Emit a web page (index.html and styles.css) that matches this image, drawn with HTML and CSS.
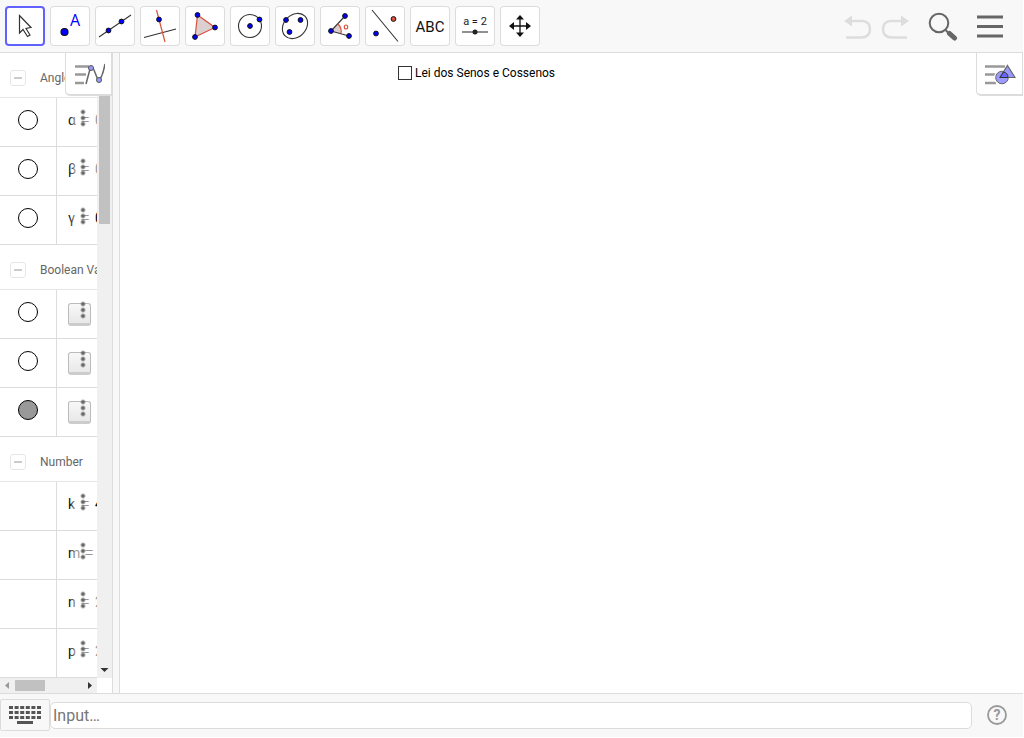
FILE: index.html
```html
<!DOCTYPE html>
<html lang="pt">
<head>
  <meta charset="UTF-8">
  <title>Lei dos Senos e Cossenos</title>
  <link rel="stylesheet" href="styles.css">
</head>
<body>
  <!-- Toolbar -->
  <header class="toolbar">
    <div class="tools">
      <button type="button" class="tool selected" aria-label="Move">
        <svg viewBox="0 0 40 40"><path d="M14.500 9.500V27L18 23.500L22.500 30.500L25 29L21 22.500L26 21.500Z" fill="#fff" stroke="#333" stroke-width="1.200"/></svg>
      </button>
      <button type="button" class="tool" aria-label="Point">
        <svg viewBox="0 0 40 40"><circle class="pt big" cx="14.500" cy="26" r="3.500"/><text x="20" y="20" class="point-label">A</text></svg>
      </button>
      <button type="button" class="tool" aria-label="Line">
        <svg viewBox="0 0 40 40"><path class="ln" d="M4 31L36 9"/><circle class="pt" cx="13.500" cy="24.500" r="2.400"/><circle class="pt" cx="26.500" cy="15.500" r="2.400"/></svg>
      </button>
      <button type="button" class="tool" aria-label="Perpendicular Line">
        <svg viewBox="0 0 40 40"><path class="ln" d="M4 31.500L36 23"/><path class="red" d="M16.500 4L25 36"/><circle class="pt" cx="19" cy="13.500" r="2.400"/></svg>
      </button>
      <button type="button" class="tool" aria-label="Polygon">
        <svg viewBox="0 0 40 40"><path class="red area" d="M12.500 9L30 21.500L10 31Z"/><circle class="pt" cx="12.500" cy="9" r="2.400"/><circle class="pt" cx="30" cy="21.500" r="2.400"/><circle class="pt" cx="10" cy="31" r="2.400"/></svg>
      </button>
      <button type="button" class="tool" aria-label="Circle">
        <svg viewBox="0 0 40 40"><circle class="ln" cx="20" cy="20" r="11.500"/><circle class="pt" cx="20" cy="20" r="2.400"/><circle class="pt" cx="29.500" cy="13.500" r="2.400"/></svg>
      </button>
      <button type="button" class="tool" aria-label="Ellipse">
        <svg viewBox="0 0 40 40"><ellipse class="ln" cx="20" cy="20" rx="14" ry="11" transform="rotate(-45 20 20)"/><circle class="pt" cx="11" cy="14" r="2.400"/><circle class="pt" cx="25.500" cy="14" r="2.400"/><circle class="pt" cx="14.500" cy="26" r="2.400"/></svg>
      </button>
      <button type="button" class="tool" aria-label="Angle">
        <svg viewBox="0 0 40 40"><path class="area" d="M11 25L18 18Q22 22 21 27.500Z"/><path class="ln" d="M25 10L11 25L29 30"/><path class="red" d="M18 18Q22 22 21 27.500"/><ellipse class="red" cx="26" cy="21" rx="1.700" ry="2"/><circle class="pt" cx="25" cy="10" r="2.400"/><circle class="pt" cx="11" cy="25" r="2.400"/><circle class="pt" cx="29" cy="30" r="2.400"/></svg>
      </button>
      <button type="button" class="tool" aria-label="Reflect about Line">
        <svg viewBox="0 0 40 40"><path class="ln" d="M7 4L33 35.500"/><circle class="pt" cx="11" cy="27.500" r="2.400"/><circle class="pt image" cx="28.500" cy="13" r="2.400"/></svg>
      </button>
      <button type="button" class="tool" aria-label="Text">
        <svg viewBox="0 0 40 40"><text x="20" y="26" class="abc">ABC</text></svg>
      </button>
      <button type="button" class="tool" aria-label="Slider">
        <svg viewBox="0 0 40 40"><text x="20" y="19" class="slider-label">a = 2</text><path d="M7 26H33" stroke="#555" stroke-width="1.300"/><circle cx="20" cy="26" r="2.500" fill="#222"/></svg>
      </button>
      <button type="button" class="tool" aria-label="Move Graphics View">
        <svg viewBox="0 0 40 40"><path d="M20 12V28M12 20H28" stroke="#111" stroke-width="1.300"/><path d="M20 9L24 13.500H16ZM20 31L24 26.500H16ZM9 20L14 16V24ZM31 20L26 16V24Z" fill="#111"/></svg>
      </button>
    </div>
    <div class="actions">
      <button type="button" class="action" aria-label="Undo" disabled>
        <svg viewBox="0 0 30 30"><path d="M7 10H20Q27 11 27 18Q27 26.500 18 26.500H3" fill="none" stroke="#ddd" stroke-width="2.500"/><path d="M1 10L9 4.500V15.500Z" fill="#ddd"/></svg>
      </button>
      <button type="button" class="action" aria-label="Redo" disabled>
        <svg viewBox="0 0 30 30"><path d="M23 10H10Q3 11 3 18Q3 26.500 12 26.500H27" fill="none" stroke="#ddd" stroke-width="2.500"/><path d="M29 10L21 4.500V15.500Z" fill="#ddd"/></svg>
      </button>
      <button type="button" class="action search" aria-label="Search">
        <svg viewBox="0 0 30 30"><circle cx="11" cy="12" r="9.300" fill="none" stroke="#666" stroke-width="2"/><path d="M17.500 19L21 22.500" stroke="#666" stroke-width="2"/><path d="M21.500 22.500L26.500 27" stroke="#666" stroke-width="5" stroke-linecap="round"/></svg>
      </button>
      <button type="button" class="action menu" aria-label="Menu">
        <svg viewBox="0 0 30 30"><path d="M2 6H28M2 15.500H28M2 25H28" stroke="#666" stroke-width="3"/></svg>
      </button>
    </div>
  </header>

  <main class="views">
    <!-- Algebra view -->
    <aside class="algebra">
      <div class="algebra-body">
        <div class="objects">
          <section>
            <h2 class="group"><button type="button" class="collapse" aria-label="Collapse Angle"></button>Angle</h2>
            <div class="row">
              <div class="marble-cell"><button type="button" class="marble" aria-label="Show α"></button></div>
              <div class="definition"><span>α</span><span class="eq">=</span><span class="value dim">0°</span><button type="button" class="more" aria-label="More"></button></div>
            </div>
            <div class="row">
              <div class="marble-cell"><button type="button" class="marble" aria-label="Show β"></button></div>
              <div class="definition"><span>β</span><span class="eq">=</span><span class="value dim">0°</span><button type="button" class="more" aria-label="More"></button></div>
            </div>
            <div class="row">
              <div class="marble-cell"><button type="button" class="marble" aria-label="Show γ"></button></div>
              <div class="definition"><span>γ</span><span class="eq">=</span><span class="value">0°</span><button type="button" class="more" aria-label="More"></button></div>
            </div>
          </section>
          <section>
            <h2 class="group"><button type="button" class="collapse" aria-label="Collapse Boolean Value"></button>Boolean Value</h2>
            <div class="row">
              <div class="marble-cell"><button type="button" class="marble" aria-label="Show a"></button></div>
              <div class="definition"><button type="button" class="toggle" aria-label="Toggle a"></button><button type="button" class="more plain" aria-label="More"></button></div>
            </div>
            <div class="row">
              <div class="marble-cell"><button type="button" class="marble" aria-label="Show b"></button></div>
              <div class="definition"><button type="button" class="toggle" aria-label="Toggle b"></button><button type="button" class="more plain" aria-label="More"></button></div>
            </div>
            <div class="row">
              <div class="marble-cell"><button type="button" class="marble filled" aria-label="Hide c"></button></div>
              <div class="definition"><button type="button" class="toggle" aria-label="Toggle c"></button><button type="button" class="more plain" aria-label="More"></button></div>
            </div>
          </section>
          <section>
            <h2 class="group"><button type="button" class="collapse" aria-label="Collapse Number"></button>Number</h2>
            <div class="row">
              <div class="marble-cell"></div>
              <div class="definition"><span>k</span><span class="eq">=</span><span class="value">4</span><button type="button" class="more" aria-label="More"></button></div>
            </div>
            <div class="row">
              <div class="marble-cell"></div>
              <div class="definition"><span>m</span><span class="eq wide">=</span><button type="button" class="more" aria-label="More"></button></div>
            </div>
            <div class="row">
              <div class="marble-cell"></div>
              <div class="definition"><span>n</span><span class="eq">=</span><span class="value dim">2</span><button type="button" class="more" aria-label="More"></button></div>
            </div>
            <div class="row">
              <div class="marble-cell"></div>
              <div class="definition"><span>p</span><span class="eq">=</span><span class="value dim">2</span><button type="button" class="more" aria-label="More"></button></div>
            </div>
          </section>
        </div>
        <div class="scroll-x">
          <svg class="arrow" viewBox="0 0 15 15"><path d="M5 7.500L9 4V11Z" fill="#999"/></svg>
          <div class="thumb-x"></div>
          <svg class="arrow" viewBox="0 0 15 15"><path d="M10 7.500L6 4V11Z" fill="#333"/></svg>
        </div>
      </div>
      <div class="scroll-y">
        <div class="track-y">
          <div class="thumb-y"></div>
          <svg class="arrow" viewBox="0 0 15 15"><path d="M7.500 9L3.500 5H11.500Z" fill="#333"/></svg>
        </div>
      </div>
      <button type="button" class="style-toggle" aria-label="Algebra style bar">
        <svg viewBox="0 0 32 24"><path d="M2 4.500H16M2 12.500H13M2 21H11" stroke="#999" stroke-width="2.500"/><path d="M13 22L17 7Q19 4 21 8L25 18Q29 18 32 2" fill="none" stroke="#666" stroke-width="1.500"/><circle class="knot" cx="18" cy="6" r="2.500"/><circle class="knot" cx="26" cy="18" r="2.500"/></svg>
      </button>
    </aside>
    <div class="splitter"></div>

    <!-- Graphics view -->
    <section class="graphics">
      <label class="check"><input type="checkbox">Lei dos Senos e Cossenos</label>
      <button type="button" class="style-toggle" aria-label="Graphics style bar">
        <svg viewBox="0 0 32 24"><path d="M1 4.500H21M1 12.500H12M1 21H12" stroke="#999" stroke-width="2.500"/><circle cx="18" cy="15.500" r="8" fill="#fff"/><path d="M23.500 0L33 18H15Z" fill="#fff"/><circle cx="18" cy="15.500" r="6.300" fill="#99f" stroke="#666"/><path d="M23.500 3.500L31 15.500H16Z" fill="#99f" stroke="#666" stroke-width="1.200"/><path d="M19.500 10Q24 11 24 15.500H16Z" fill="#66f" stroke="#333"/></svg>
      </button>
    </section>
  </main>

  <!-- Input bar -->
  <footer class="input-bar">
    <button type="button" class="keyboard" aria-label="Keyboard">
      <svg viewBox="0 0 34 20"><path d="M1 2.500H33M1 7.500H33M1 12.500H33" stroke="#555" stroke-width="2.800" stroke-dasharray="4 1.600"/><path d="M9 17.500H25" stroke="#555" stroke-width="3"/></svg>
    </button>
    <input type="text" class="input" placeholder="Input…" aria-label="Input">
    <button type="button" class="help" aria-label="Help">
      <svg viewBox="0 0 22 22"><circle cx="11" cy="11" r="9" fill="none" stroke="#999" stroke-width="1.800"/><text x="11" y="16">?</text></svg>
    </button>
  </footer>
</body>
</html>
```

FILE: styles.css
```css
* {
  box-sizing: border-box;
}
body {
  margin: 0;
  height: 100vh;
  padding: 0 1px 1px 0;
  display: flex;
  flex-direction: column;
  background: #fff;
  font-family: Roboto, "Liberation Sans", sans-serif;
  overflow: hidden;
}
button {
  padding: 0;
  border: none;
  background: none;
  font-family: inherit;
}
svg {
  display: block;
}

/* Toolbar */
.toolbar {
  display: flex;
  justify-content: space-between;
  height: 53px;
  padding: 6px 18px 6px 5px;
  background: #f8f8f8;
  border-bottom: 1px solid #dcdcdc;
}
.tools {
  display: flex;
  gap: 5px;
}
.tool {
  width: 40px;
  height: 40px;
  border-radius: 4px;
  background: #fff;
  box-shadow: inset 0 0 0 1px #dcdcdc;
}
.tool.selected {
  box-shadow: inset 0 0 0 2px #6161ff;
}
.tool svg {
  width: 40px;
  height: 40px;
}
.ln {
  fill: none;
  stroke: #333;
  stroke-width: 1.1;
}
.red {
  fill: none;
  stroke: #d9503f;
  stroke-width: 1.2;
}
.area {
  fill: #dccfcf;
}
.pt {
  fill: #00f;
  stroke: #111;
}
.pt.big {
  stroke-width: 1.2;
}
.pt.image {
  fill: #e0503f;
}
.point-label {
  font-family: "Open Sans", sans-serif;
  font-size: 16px;
  fill: #00f;
}
.abc {
  font-size: 15px;
  text-anchor: middle;
  fill: #111;
}
.slider-label {
  font-size: 11px;
  text-anchor: middle;
  fill: #222;
}
.actions {
  display: flex;
  align-items: center;
}
.action {
  width: 30px;
  height: 30px;
  margin-left: 7px;
}
.action.search {
  margin-left: 18px;
}
.action.menu {
  margin-left: 17px;
}

/* Views */
.views {
  flex: 1;
  display: flex;
  min-height: 0;
}
.algebra {
  position: relative;
  width: 113px;
  display: flex;
  border-right: 1px solid #dcdcdc;
}
.algebra-body {
  flex: 1;
  min-width: 0;
  display: flex;
  flex-direction: column;
}
.objects {
  flex: 1;
  overflow: hidden;
}
.group {
  display: flex;
  align-items: center;
  gap: 14px;
  height: 45px;
  margin: 0;
  padding: 6px 0 0 10px;
  border-bottom: 1px solid #e6e6e6;
  color: #666;
  font-size: 12px;
  font-weight: normal;
  white-space: nowrap;
}
.collapse {
  flex: none;
  display: flex;
  align-items: center;
  justify-content: center;
  width: 16px;
  height: 16px;
  border: 1px solid #e6e6e6;
  border-radius: 3px;
}
.collapse::before {
  content: "";
  width: 8px;
  height: 2px;
  background: #ccc;
}
.row {
  display: flex;
  height: 49px;
  border-bottom: 1px solid #dcdcdc;
}
.marble-cell {
  flex: none;
  width: 57px;
  padding: 12px 0 0 18px;
  border-right: 1px solid #dcdcdc;
}
.marble {
  display: block;
  width: 20px;
  height: 20px;
  border: 1px solid #000;
  border-radius: 50%;
  background: #fff;
}
.marble.filled {
  background: #999;
}
.definition {
  position: relative;
  flex: 1;
  min-width: 0;
  display: flex;
  padding: 13px 0 0 11px;
  overflow: hidden;
  font-size: 14px;
  line-height: 18px;
  color: #000;
}
.eq {
  position: absolute;
  left: 23px;
  font-size: 18px;
  font-weight: 300;
}
.eq.wide {
  left: 27px;
}
.value {
  position: absolute;
  left: 38px;
}
.value.dim {
  color: #999;
}
.more {
  position: absolute;
  top: 0;
  left: 12px;
  width: 25px;
  height: 46px;
  background:
    radial-gradient(circle, #666 1px, transparent 3px) 11px 11px / 6px 6px no-repeat,
    radial-gradient(circle, #666 1px, transparent 3px) 11px 17px / 6px 6px no-repeat,
    radial-gradient(circle, #666 1px, transparent 3px) 11px 23px / 6px 6px no-repeat,
    linear-gradient(to right, rgba(255, 255, 255, 0), rgba(255, 255, 255, 0.6) 25%);
}
.more.plain {
  background:
    radial-gradient(circle, #666 1px, transparent 3px) 11px 11px / 6px 6px no-repeat,
    radial-gradient(circle, #666 1px, transparent 3px) 11px 17px / 6px 6px no-repeat,
    radial-gradient(circle, #666 1px, transparent 3px) 11px 23px / 6px 6px no-repeat;
}
.toggle {
  width: 23px;
  height: 23px;
  border: 1px solid #bbb;
  border-bottom: 3px solid #ccc;
  border-radius: 3px;
  background: linear-gradient(#f8f8f8, #e8e8e8);
}

/* Scrollbars */
.arrow {
  width: 15px;
  height: 15px;
}
.scroll-x {
  display: flex;
  justify-content: space-between;
  height: 15px;
  background: #f0f0f0;
}
.thumb-x {
  width: 30px;
  height: 11px;
  margin: 2px auto 0 0;
  background: #c1c1c1;
}
.scroll-y {
  width: 15px;
  padding-bottom: 15px;
}
.track-y {
  display: flex;
  flex-direction: column;
  justify-content: space-between;
  height: 100%;
  background: #f0f0f0;
}
.thumb-y {
  width: 11px;
  height: 171px;
  margin-left: 2px;
  background: #c1c1c1;
}
.splitter {
  width: 7px;
  background: #f8f8f8;
  border-right: 1px solid #dcdcdc;
}
.style-toggle {
  position: absolute;
  top: 0;
  right: 0;
  display: flex;
  align-items: center;
  justify-content: center;
  width: 47px;
  height: 43px;
  background: #fff;
  border: 1px solid #dcdcdc;
  border-top: none;
  border-bottom-width: 2px;
  border-bottom-left-radius: 5px;
}
.style-toggle svg {
  width: 32px;
  height: 24px;
}
.knot {
  fill: #99f;
  stroke: #555;
}

/* Graphics view */
.graphics {
  position: relative;
  flex: 1;
  padding: 12px 0 0 278px;
}
.check {
  display: inline-flex;
  align-items: center;
  gap: 3px;
  font-size: 12px;
  line-height: 16px;
  color: #000;
}
.check input {
  appearance: none;
  width: 14px;
  height: 14px;
  margin: 0;
  border: 1px solid #333;
  background: #fff;
}

/* Input bar */
.input-bar {
  display: flex;
  align-items: center;
  height: 44px;
  padding-bottom: 1px;
  background: #f8f8f8;
  border-top: 1px solid #dcdcdc;
}
.keyboard {
  display: flex;
  align-items: center;
  justify-content: center;
  width: 50px;
  height: 32px;
  border: 1px solid #dcdcdc;
  border-radius: 2px;
}
.keyboard svg {
  width: 34px;
  height: 20px;
}
.input {
  flex: 1;
  min-width: 0;
  height: 27px;
  padding: 0 2px;
  border: 1px solid #dcdcdc;
  border-radius: 5px;
  background: #fff;
  font-family: inherit;
  font-size: 16px;
}
.input::placeholder {
  color: #777;
}
.help {
  width: 22px;
  height: 22px;
  margin: 0 15px 0 14px;
}
.help text {
  font-size: 14px;
  font-weight: bold;
  text-anchor: middle;
  fill: #999;
}
```
